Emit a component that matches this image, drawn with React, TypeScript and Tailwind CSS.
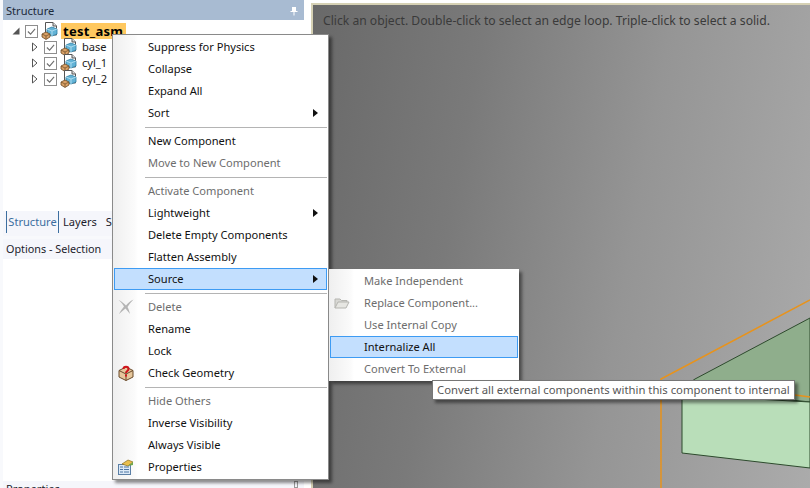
import React from 'react';

type Item = { label?: string; off?: boolean; sep?: boolean; arrow?: boolean; active?: boolean; icon?: React.ReactNode };

const PartIcon = () => (
  <svg width="17" height="18" viewBox="0 0 17 18" className="shrink-0">
    <path d="M4.500 0.500h7.500l3.500 3.500v9h-11z" fill="#fff" stroke="#555" />
    <path d="M12 0.500v3.500h3.500" fill="#ddd" stroke="#555" />
    <path d="M6 7l5-2 5 2v5l-5 2-5-2z" fill="#63b3d6" stroke="#2f7ea3" strokeWidth="0.8" />
    <path d="M6 7l5 2 5-2M11 9v5" fill="none" stroke="#bfe6f5" strokeWidth="0.8" />
    <path d="M1 12l4-2 4 2v3l-4 2.500-4-2.500z" fill="#d9a066" stroke="#6b4a24" strokeWidth="0.8" />
    <path d="M1 12l4 2 4-2M5 14v3" fill="none" stroke="#6b4a24" strokeWidth="0.7" />
  </svg>
);

const Check = () => (
  <div className="flex h-[13px] w-[13px] shrink-0 items-center justify-center border border-[#8e8e8e] bg-white">
    <svg width="9" height="9" viewBox="0 0 10 10">
      <path d="M1 5l3 3 5-6" fill="none" stroke="#6e6e6e" strokeWidth="1.200" />
    </svg>
  </div>
);

const TreeChild = ({ label }: { label: string }) => (
  <div className="flex h-4 items-center pl-[29px]">
    <svg width="6" height="10" viewBox="0 0 6 10" className="mr-[6px] shrink-0">
      <path d="M0.500 1l4.500 4-4.500 4z" fill="#fff" stroke="#555" />
    </svg>
    <Check />
    <div className="ml-[3px]"><PartIcon /></div>
    <span className="ml-[5px] text-[11.1px] leading-4 text-[#1a1a1a]">{label}</span>
  </div>
);

const mainItems: Item[] = [
  { label: 'Suppress for Physics' },
  { label: 'Collapse' },
  { label: 'Expand All' },
  { label: 'Sort', arrow: true },
  { sep: true },
  { label: 'New Component' },
  { label: 'Move to New Component', off: true },
  { sep: true },
  { label: 'Activate Component', off: true },
  { label: 'Lightweight', arrow: true },
  { label: 'Delete Empty Components' },
  { label: 'Flatten Assembly' },
  { label: 'Source', arrow: true, active: true },
  { sep: true },
  {
    label: 'Delete',
    off: true,
    icon: (
      <svg width="16" height="16" viewBox="0 0 16 16">
        <path d="M0.500 1c3 1 5.500 3.500 7.500 5.500 2-2.500 4-4.500 7.500-6-2.500 2.500-4.500 5-6 7.500 1 2 2 4.500 2.500 7l-4.500-5.500c-2 1.500-4 3.500-6.500 5.500 1-2.500 3-5 5-7.500C5 5.500 3 3 0.500 1z" fill="#b4b4b4" />
      </svg>
    ),
  },
  { label: 'Rename' },
  { label: 'Lock' },
  {
    label: 'Check Geometry',
    icon: (
      <svg width="16" height="16" viewBox="0 0 16 16">
        <path d="M1 5.500l7-3.500 7 3.500v6.500l-7 3.500-7-3.500z" fill="#e6c79c" stroke="#6a4a2a" />
        <path d="M1 5.500l7 3.500 7-3.500M8 9v6.500" fill="none" stroke="#6a4a2a" />
        <path d="M5.500 4c0-3 5-3 5 0 0 2-2.500 2-2.500 4" fill="none" stroke="#d0141c" strokeWidth="2" />
        <rect x="7" y="9.500" width="2" height="2" fill="#d0141c" />
      </svg>
    ),
  },
  { sep: true },
  { label: 'Hide Others', off: true },
  { label: 'Inverse Visibility' },
  { label: 'Always Visible' },
  {
    label: 'Properties',
    icon: (
      <svg width="16" height="16" viewBox="0 0 16 16">
        <rect x="0.500" y="5.500" width="12" height="10" fill="#dce9f7" stroke="#5b7fa6" />
        <path d="M2 8h3M6 8h5M2 10.500h3M6 10.500h5M2 13h3M6 13h5" stroke="#4f76a3" />
        <path d="M4 5l6-4 5 2-5 4z" fill="#e9bf4e" stroke="#8b6c1c" strokeWidth="0.7" />
        <path d="M10 7l5-4v3z" fill="#6fa84a" />
      </svg>
    ),
  },
];

const subItems: Item[] = [
  { label: 'Make Independent', off: true },
  {
    label: 'Replace Component...',
    off: true,
    icon: (
      <svg width="16" height="12" viewBox="0 0 16 12">
        <path d="M1 11V2h5l1.500 1.500H13V5" fill="#d8d8d4" stroke="#b5b5b0" />
        <path d="M1 11l3-6h11l-3 6z" fill="#e6e6e2" stroke="#b5b5b0" />
      </svg>
    ),
  },
  { label: 'Use Internal Copy', off: true },
  { label: 'Internalize All', active: true },
  { label: 'Convert To External', off: true },
];

const MenuRows = ({ items, textLeft }: { items: Item[]; textLeft: string }) => (
  <>
    {items.map((it, i) =>
      it.sep ? (
        <div key={i} className="flex h-[6px] items-center pl-[32px] pr-[1px]">
          <div className="h-px w-full bg-[#b4b4b4]" />
        </div>
      ) : (
        <div
          key={i}
          className={`relative mx-px flex h-[22px] items-center border ${it.active ? 'border-[#3d9bf3] bg-[#c3dffe]' : 'border-transparent'}`}
        >
          <div className="flex w-[22px] shrink-0 items-center justify-center">{it.icon}</div>
          <span className={`${textLeft} whitespace-nowrap text-[11.1px] leading-none ${it.off ? 'text-[#6d6d6d]' : 'text-[#111]'}`}>{it.label}</span>
          {it.arrow && (
            <svg width="5" height="8" viewBox="0 0 5 8" className="absolute right-[8px] top-[6px]">
              <path d="M0 0l5 4-5 4z" fill="#111" />
            </svg>
          )}
        </div>
      ),
    )}
  </>
);

export default function App() {
  return (
    <div className="relative flex h-[488px] w-[810px] overflow-hidden bg-white font-['Noto_Sans',sans-serif]">
      {/* Left dock */}
      <div className="flex h-full w-[304px] shrink-0 flex-col bg-[#f8f9fc] pl-[3px]">
        <div className="flex h-[20px] items-center justify-between bg-[#a8bbd2] pl-[3px] pr-[6px] pt-px">
          <span className="text-[11.1px] leading-none text-[#1c2a3a]">Structure</span>
          <svg width="8" height="10" viewBox="0 0 8 10">
            <path d="M2 1h4v4h1.500v1H4.500v3.500h-1V6H.5V5H2z" fill="#fff" />
          </svg>
        </div>

        <div className="h-[191px] bg-white pt-[3px]">
          <div className="flex h-4 items-center pl-[9px]">
            <svg width="8" height="8" viewBox="0 0 8 8" className="mr-[5px] shrink-0">
              <path d="M7.500 0.500v7h-7z" fill="#555" />
            </svg>
            <Check />
            <div className="ml-[3px]"><PartIcon /></div>
            <span className="ml-[3px] flex h-4 w-[65px] items-center bg-[#ffc85f] pl-[2px] text-[13px] font-bold leading-none tracking-[0.3px] text-black">test_asm</span>
          </div>
          <TreeChild label="base" />
          <TreeChild label="cyl_1" />
          <TreeChild label="cyl_2" />
        </div>

        <div className="flex h-[25px] items-start bg-[#f5f6fb] pl-[3px] text-[11.1px]">
          <span className="flex h-[22px] w-[53px] items-center justify-center border-x border-[#3c6e9f] text-[#3c6e9f]">Structure</span>
          <span className="ml-[4px] flex h-[22px] items-center text-[#1c1c2c]">Layers</span>
          <span className="ml-[9px] flex h-[22px] items-center text-[#1c1c2c]">S</span>
        </div>
        <div className="mt-[3px] flex h-[20px] items-center bg-[#f5f6fb] pl-[3px] pt-px text-[10.8px] text-[#1c1c2c]">Options - Selection</div>
        <div className="flex-1 bg-white" />
        <div className="flex h-[7px] items-start justify-between overflow-hidden bg-[#f5f6fb] pl-[3px] pr-[6px] text-[11.1px] leading-[15px] text-[#1c1c2c]">
          <span className="-mb-4">Properties</span>
          <div className="h-[7px] w-[4px] border border-[#999]" />
        </div>
      </div>

      <div className="h-full w-[7px] shrink-0 bg-white" />

      {/* Graphics viewport */}
      <div className="relative mt-[3px] flex-1 border-l-2 border-t-2 border-[#d6d1b4] bg-[linear-gradient(100deg,#696969_0%,#7a7a7a_30%,#959595_62%,#ababab_100%)]">
        <p className="whitespace-nowrap pl-[10px] pt-[7px] text-[12.150px] leading-[18px] text-[#3a3a3a]">Click an object. Double-click to select an edge loop. Triple-click to select a solid.</p>
        <svg className="absolute left-[-313px] top-[-5px]" width="810" height="488" viewBox="0 0 810 488">
          <path d="M695 379L810 318V402L682 388z" fill="#8fae8c" stroke="#2d4a2d" strokeWidth="1" />
          <path d="M682 395L810 402V468L682 453z" fill="#b9deb9" stroke="#2d4a2d" strokeWidth="1" />
          <path d="M661 488V379L810 300" fill="none" stroke="#e8931c" strokeWidth="1.500" />
          <path d="M795 395L810 397" fill="none" stroke="#e8931c" strokeWidth="1.500" />
        </svg>
      </div>

      {/* Context menu */}
      <div className="absolute left-[112px] top-[34px] h-[446px] w-[217px] border border-[#8a8a8a] bg-[linear-gradient(90deg,#efefef_0px,#fbfbfb_22px,#ffffff_25px)] py-px shadow-[3px_3px_3px_rgba(0,0,0,0.45)]">
        <MenuRows items={mainItems} textLeft="ml-[11px]" />
      </div>

      {/* Source submenu */}
      <div className="absolute left-[329px] top-[269px] h-[112px] w-[190px] bg-[linear-gradient(90deg,#efefef_0px,#fbfbfb_22px,#ffffff_25px)] py-px shadow-[3px_3px_3px_rgba(0,0,0,0.45)]">
        <MenuRows items={subItems} textLeft="ml-[11px]" />
      </div>

      {/* Tooltip */}
      <div className="absolute left-[432px] top-[380px] flex h-[20px] w-[363px] items-center whitespace-nowrap border border-[#767676] bg-white pl-[4px] text-[11.300px] leading-none text-[#575757] shadow-[3px_3px_3px_rgba(0,0,0,0.45)]">
        Convert all external components within this component to internal
      </div>
    </div>
  );
}
